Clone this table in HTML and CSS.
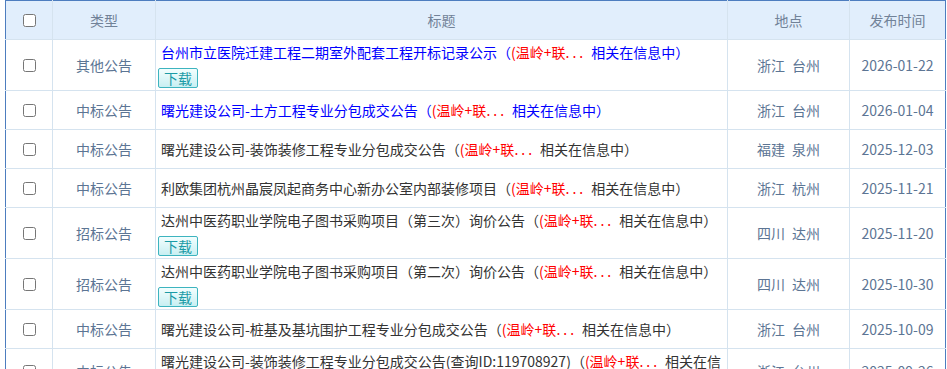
FILE: index.html
```html
<!DOCTYPE html>
<html lang="zh-CN">
<head>
<meta charset="utf-8">
<title>公告列表</title>
<link rel="stylesheet" href="styles.css">
</head>
<body>
<table class="list">
  <colgroup>
    <col class="c-check">
    <col class="c-type">
    <col class="c-title">
    <col class="c-loc">
    <col class="c-date">
  </colgroup>
  <thead>
    <tr>
      <th><input type="checkbox" class="chk"></th>
      <th>类型</th>
      <th>标题</th>
      <th>地点</th>
      <th>发布时间</th>
    </tr>
  </thead>
  <tbody>
    <tr>
      <td><input type="checkbox" class="chk"></td>
      <td class="type">其他公告</td>
      <td class="title"><div class="inner">
        <div class="line blue">台州市立医院迁建工程二期室外配套工程开标记录公示（<span class="red">(温岭+联<span class="dots">...</span></span><span class="rest">相关在信息中）</span></div>
        <span class="dl">下载</span>
      </div></td>
      <td class="loc">浙江 台州</td>
      <td class="date">2026-01-22</td>
    </tr>
    <tr>
      <td><input type="checkbox" class="chk"></td>
      <td class="type">中标公告</td>
      <td class="title"><div class="inner">
        <div class="line blue">曙光建设公司-土方工程专业分包成交公告（<span class="red">(温岭+联<span class="dots">...</span></span><span class="rest">相关在信息中）</span></div>
      </div></td>
      <td class="loc">浙江 台州</td>
      <td class="date">2026-01-04</td>
    </tr>
    <tr>
      <td><input type="checkbox" class="chk"></td>
      <td class="type">中标公告</td>
      <td class="title"><div class="inner">
        <div class="line">曙光建设公司-装饰装修工程专业分包成交公告（<span class="red">(温岭+联<span class="dots">...</span></span><span class="rest">相关在信息中）</span></div>
      </div></td>
      <td class="loc">福建 泉州</td>
      <td class="date">2025-12-03</td>
    </tr>
    <tr>
      <td><input type="checkbox" class="chk"></td>
      <td class="type">中标公告</td>
      <td class="title"><div class="inner">
        <div class="line">利欧集团杭州晶宸凤起商务中心新办公室内部装修项目（<span class="red">(温岭+联<span class="dots">...</span></span><span class="rest">相关在信息中）</span></div>
      </div></td>
      <td class="loc">浙江 杭州</td>
      <td class="date">2025-11-21</td>
    </tr>
    <tr>
      <td><input type="checkbox" class="chk"></td>
      <td class="type">招标公告</td>
      <td class="title"><div class="inner">
        <div class="line">达州中医药职业学院电子图书采购项目（第三次）询价公告（<span class="red">(温岭+联<span class="dots">...</span></span><span class="rest">相关在信息中）</span></div>
        <span class="dl">下载</span>
      </div></td>
      <td class="loc">四川 达州</td>
      <td class="date">2025-11-20</td>
    </tr>
    <tr>
      <td><input type="checkbox" class="chk"></td>
      <td class="type">招标公告</td>
      <td class="title"><div class="inner">
        <div class="line">达州中医药职业学院电子图书采购项目（第二次）询价公告（<span class="red">(温岭+联<span class="dots">...</span></span><span class="rest">相关在信息中）</span></div>
        <span class="dl">下载</span>
      </div></td>
      <td class="loc">四川 达州</td>
      <td class="date">2025-10-30</td>
    </tr>
    <tr>
      <td><input type="checkbox" class="chk"></td>
      <td class="type">中标公告</td>
      <td class="title"><div class="inner">
        <div class="line">曙光建设公司-桩基及基坑围护工程专业分包成交公告（<span class="red">(温岭+联<span class="dots">...</span></span><span class="rest">相关在信息中）</span></div>
      </div></td>
      <td class="loc">浙江 台州</td>
      <td class="date">2025-10-09</td>
    </tr>
    <tr>
      <td><input type="checkbox" class="chk"></td>
      <td class="type">中标公告</td>
      <td class="title"><div class="inner">
        <div class="line">曙光建设公司-装饰装修工程专业分包成交公告(查询ID:119708927)（<span class="red">(温岭+联<span class="dots">...</span></span><span class="rest">相关在信息中）</span></div>
      </div></td>
      <td class="loc">浙江 台州</td>
      <td class="date">2025-09-26</td>
    </tr>
  </tbody>
</table>
</body>
</html>
```
FILE: styles.css
```css
html, body {
  margin: 0;
  padding: 0;
  background: #ffffff;
}

body {
  padding-left: 5px;
  font-family: "Noto Sans CJK SC", sans-serif;
  font-size: 14px;
  color: #333333;
}

.list {
  width: 940px;
  border-collapse: collapse;
  table-layout: fixed;
}

.c-check { width: 47px; }
.c-type { width: 103px; }
.c-title { width: 572px; }
.c-loc { width: 122px; }
.c-date { width: 96px; }

.list th,
.list td {
  border: 1px solid #d5e3ef;
  padding: 0;
  height: 38px;
  text-align: center;
  vertical-align: middle;
  line-height: 20px;
}

.list th {
  background: #e1eefc;
  font-weight: normal;
  color: #718298;
}

.list thead th {
  border-top-color: #4d7dbf;
}

.list tr > :first-child {
  border-left-color: #4d7dbf;
}

.list tr > :last-child {
  border-right-color: #4d7dbf;
}

.chk {
  display: block;
  width: 13px;
  height: 13px;
  margin: 0 auto;
}

.type,
.loc,
.date {
  color: #5c7594;
}

.list td.loc {
  word-spacing: 4px;
}

.list td.title {
  text-align: left;
  padding: 0 5px;
}

.inner {
  padding: 2px 0;
}

.line {
  line-height: 20px;
  color: #333333;
}

.line.blue {
  color: #0000ff;
}

.red {
  color: #ff0000;
}

.dots {
  letter-spacing: 3px;
}

.rest {
  margin-left: 5px;
}

.dl {
  display: block;
  box-sizing: border-box;
  width: 40px;
  height: 20px;
  margin: 6px 0 0 -3px;
  border: 1px solid #3db4bf;
  border-radius: 2px;
  background: linear-gradient(#f3fefe, #c8eff2);
  color: #1b9ba6;
  font-size: 14px;
  line-height: 18px;
  text-align: center;
}
```
